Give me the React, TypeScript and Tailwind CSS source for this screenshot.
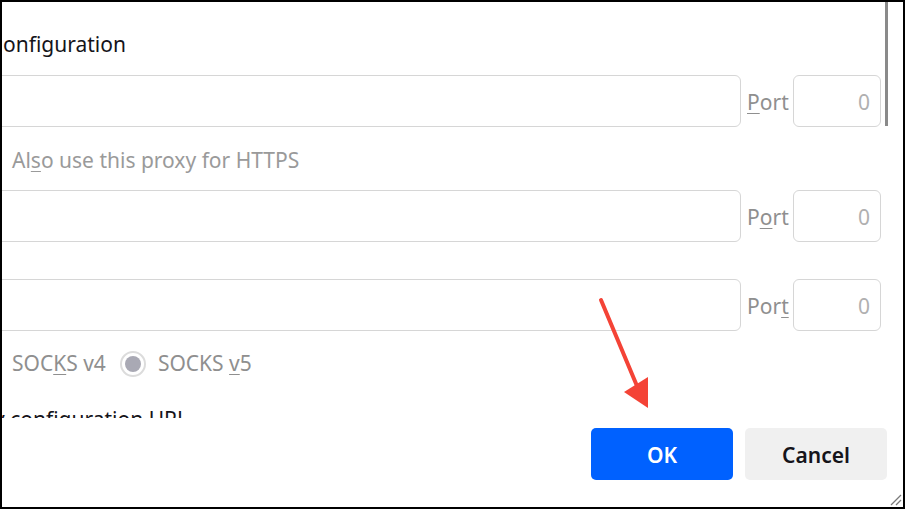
import React from "react";

function PortField({ label, u }: { label: string; u: number }) {
  return (
    <div className="flex items-center h-[52px]">
      <div className="-ml-[20px] flex-1 h-[52px] rounded-[6px] border border-[#d6d6d6] bg-white" />
      <div className="ml-[6px] w-[46px] pt-[3px] text-[#8f8f8f] text-[21px]">
        {label.split("").map((c, i) => (
          <span key={i} className={i === u ? "underline underline-offset-[3px] decoration-1" : ""}>
            {c}
          </span>
        ))}
      </div>
      <div className="w-[88px] h-[52px] rounded-[6px] border border-[#d6d6d6] bg-white flex items-center justify-end pr-[10px] pt-[3px] text-[21px] text-[#b0b0b0]">
        0
      </div>
    </div>
  );
}

export default function App() {
  return (
    <div
      className="relative w-[905px] h-[509px] overflow-hidden bg-white border-t-2 border-l-2 border-r-2 border-b-2 border-black flex flex-col"
      style={{ fontFamily: '"Noto Sans", "Open Sans", sans-serif' }}
    >
      <div className="h-[416px] overflow-hidden flex">
        <div className="flex-1 flex flex-col">
          <div className="mt-[28px] h-[28px] leading-[28px] text-[21px] text-[#15141a] pl-[1px]">onfiguration</div>
          <div className="mt-[17px]">
            <PortField label="Port" u={0} />
          </div>
          <div className="mt-[19px] h-[28px] leading-[28px] text-[21px] text-[#9a9a9a] pl-[10px]">
            Al<span className="underline underline-offset-[3px] decoration-1">s</span>o use this proxy for HTTPS
          </div>
          <div className="mt-[16px]">
            <PortField label="Port" u={1} />
          </div>
          <div className="mt-[37px]">
            <PortField label="Port" u={3} />
          </div>
          <div className="mt-[19px] h-[28px] flex items-center text-[21px] text-[#8f8f8f] pl-[10px]">
            <span>
              SOC<span className="underline underline-offset-[3px] decoration-1">K</span>S v4
            </span>
            <span className="ml-[14px] w-[26px] h-[26px] rounded-full border-2 border-[#dcdcdc] flex items-center justify-center">
              <span className="w-[16px] h-[16px] rounded-full bg-[#a9a9b4]" />
            </span>
            <span className="ml-[12px]">
              SOCKS <span className="underline underline-offset-[3px] decoration-1">v</span>5
            </span>
          </div>
          <div className="mt-[27px] h-[28px] leading-[28px] text-[21px] text-[#15141a] -ml-[8px]">
            y configuration URL
          </div>
        </div>
        <div className="w-[22px] pl-[4px]">
          <div className="w-[3px] h-[124px] bg-[#8a8a8a]" />
        </div>
      </div>
      <div className="mt-[10px] flex justify-end gap-[12px] pr-[16px]">
        <button className="w-[142px] h-[52px] rounded-[5px] bg-[#0061ff] text-white text-[21px] font-semibold pt-[3px]">
          OK
        </button>
        <button className="w-[142px] h-[52px] rounded-[5px] bg-[#f0f0f0] text-[#15141a] text-[21px] font-semibold pt-[3px]">
          Cancel
        </button>
      </div>
      <svg className="absolute right-[1px] bottom-[1px]" width="12" height="12" viewBox="0 0 12 12">
        <line x1="1" y1="11" x2="11" y2="1" stroke="#7a7a7a" strokeWidth="1.2" />
        <line x1="6" y1="11" x2="11" y2="6" stroke="#7a7a7a" strokeWidth="1.2" />
      </svg>
      <svg className="absolute left-[-2px] top-[-2px] pointer-events-none" width="905" height="509" viewBox="0 0 905 509">
        <line x1="601" y1="300" x2="637" y2="386" stroke="#f44336" strokeWidth="4" strokeLinecap="round" />
        <polygon points="648,408 624,392 648,377" fill="#f44336" />
      </svg>
    </div>
  );
}
